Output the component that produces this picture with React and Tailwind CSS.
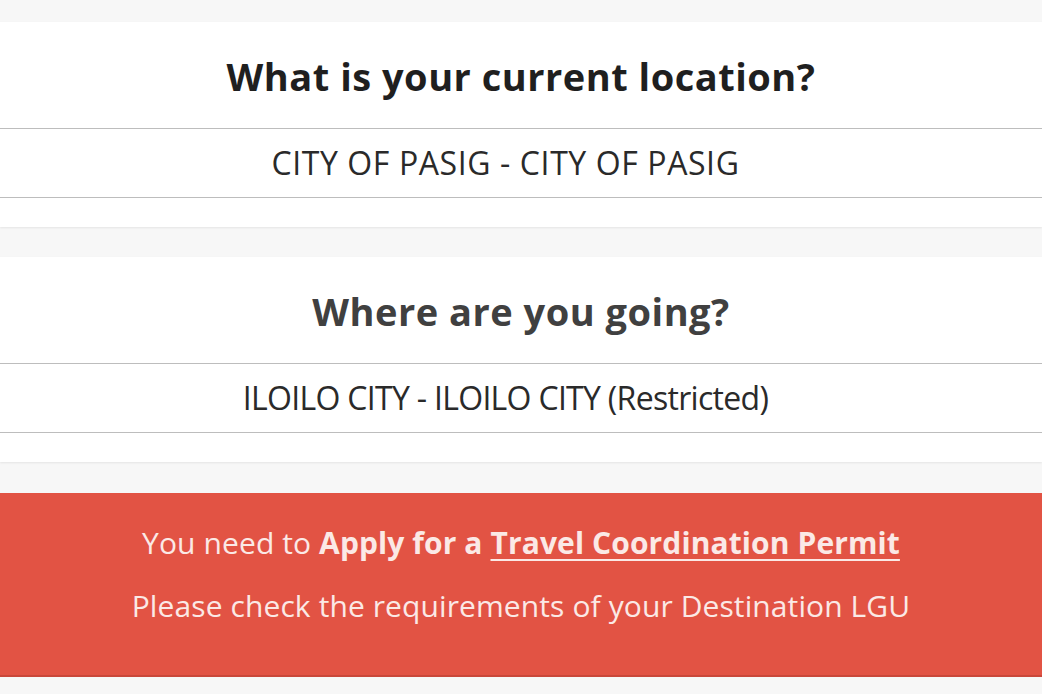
import React from 'react';

const font = { fontFamily: '"Open Sans", "Noto Sans", sans-serif' };

const Question = ({ title, value, titleClass, valueClass, className = '' }) => (
  <div className={`bg-white shadow-[0_1px_2px_rgba(0,0,0,0.08)] ${className}`}>
    <div className="h-[106px] flex items-center justify-center pt-[2px]">
      <h2 className={`text-[38px] font-bold tracking-[0.5px] ${titleClass}`}>{title}</h2>
    </div>
    <div className="h-[70px] border-y border-[#bdbdbd] flex items-center justify-center pr-[31px]">
      <span className={`text-[32px] text-[#2a2a2a] ${valueClass}`}>{value}</span>
    </div>
    <div className="h-[29px]" />
  </div>
);

export default function App() {
  return (
    <div style={font} className="min-h-screen bg-[#f7f7f7] pt-[22px]">
      <Question
        title="What is your current location?"
        value="CITY OF PASIG - CITY OF PASIG"
        titleClass="text-[#1f1f1f]"
        valueClass="tracking-[0.6px]"
      />
      <Question
        className="mt-[30px]"
        title="Where are you going?"
        value="ILOILO CITY - ILOILO CITY (Restricted)"
        titleClass="text-[#404040]"
        valueClass="tracking-[-0.7px]"
      />
      <div className="mt-[31px] h-[184px] bg-[#e25344] border-b-2 border-[#c9473a] flex flex-col items-center justify-center gap-[18px] text-[#fbe9e6] text-[30px] tracking-[0.1px] pb-[21px]">
        <p>
          You need to <b className="font-bold">Apply for a</b>{' '}
          <a href="#" className="font-bold underline underline-offset-[5px] decoration-2">Travel Coordination Permit</a>
        </p>
        <p>Please check the requirements of your Destination LGU</p>
      </div>
    </div>
  );
}
